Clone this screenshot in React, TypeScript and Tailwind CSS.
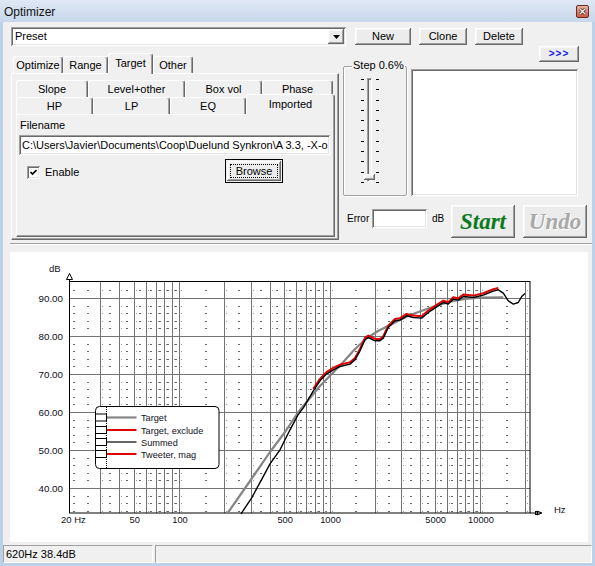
import React from "react";

const raised =
  "bg-[#ececec] shadow-[inset_-1px_-1px_#696969,inset_1px_1px_#ffffff,inset_-2px_-2px_#a0a0a0,inset_2px_2px_#f6f6f6]";
const sunken =
  "bg-white shadow-[inset_1px_1px_#a0a0a0,inset_-1px_-1px_#ffffff,inset_2px_2px_#696969,inset_-2px_-2px_#e3e3e3]";

const lx = (f: number) => 179 + 150.5 * (Math.log10(f) - 2);
const ly = (db: number) => 298 + (90 - db) * 3.8;

const majorF: number[] = [];
for (let d = 10; d <= 10000; d *= 10) {
  for (let k = 1; k <= 9; k++) {
    const f = d * k;
    if (f >= 30 && f <= 20000) majorF.push(f);
  }
}
majorF.push(20000);
const dotF: number[] = [20];
for (let d = 10; d <= 10000; d *= 10) {
  for (let k = 1; k <= 9; k++) {
    const f = d * (k + 0.5);
    if (f >= 25 && f <= 16000) dotF.push(f);
  }
}
const dotRows: number[] = [];
for (let db = 34; db <= 92; db += 2) dotRows.push(db);
const majorRows = [40, 50, 60, 70, 80, 90];

const black: [number, number][] = [
  [241, 513], [251.7, 497], [262, 478], [270, 463], [280, 449], [290, 429], [298, 414],
  [303.3, 407], [313.3, 390], [320, 380], [326.7, 373], [333.3, 369], [340, 365.7],
  [350, 363.3], [355, 359], [360, 350], [365, 339], [368.3, 336.7], [375, 340], [380, 340],
  [383.3, 337.3], [388.3, 326.7], [395, 320], [400, 319.3], [406.7, 315], [413.3, 316.7],
  [421.7, 317.3], [428.3, 311.7], [436.7, 306], [443.3, 301.7], [448.3, 303.3],
  [453.3, 298.3], [458.3, 299.3], [463.3, 295.7], [473.3, 296.7], [483.3, 294.3],
  [493.3, 290.3], [498.3, 289], [503.3, 292.3], [508.3, 300], [513.3, 303.3],
  [518.3, 301.7], [521.7, 295.7], [525, 292.7],
];
const gray: [number, number][] = [
  [227.7, 513], [250, 481], [270, 452], [285, 432], [297.7, 413], [303.3, 406],
  [320, 386], [343.3, 362], [355, 349], [366.7, 338.3], [378, 331], [390, 325],
  [410, 315], [433.3, 306.7], [450, 301.7], [465, 299], [480, 297.7], [503.3, 297.3],
];
const pts = (a: [number, number][], dy = 0) => a.map(([x, y]) => `${x},${y + dy}`).join(" ");
const red = black.filter(([x]) => x >= 312 && x <= 501);

function Chart() {
  return (
    <svg width={578} height={290} viewBox="10 252 578 290" fontFamily="'Liberation Sans', Arial, sans-serif">
      <rect x={10} y={252} width={578} height={290} fill="#ffffff" />
      {dotF.map((f) =>
        dotRows.map((db) => (
          <rect key={`d${f}-${db}`} x={Math.round(lx(f)) - 1} y={Math.round(ly(db))} width={2} height={1} fill="#666" />
        ))
      )}
      {majorF.map((f) =>
        dotRows.map((db) => (
          <rect key={`m${f}-${db}`} x={Math.round(lx(f)) + 2} y={Math.round(ly(db))} width={1} height={1} fill="#999" />
        ))
      )}
      {majorF.map((f) => (
        <line key={`v${f}`} x1={Math.round(lx(f)) + 0.5} x2={Math.round(lx(f)) + 0.5} y1={282} y2={513} stroke="#737373" strokeWidth={1} />
      ))}
      {majorRows.map((db) => (
        <line key={`h${db}`} x1={70} x2={530} y1={Math.round(ly(db)) + 0.5} y2={Math.round(ly(db)) + 0.5} stroke="#737373" strokeWidth={1} />
      ))}
      <rect x={69.5} y={281.5} width={460.5} height={231.5} fill="none" stroke="#000" strokeWidth={1} />
      <line x1={69.5} x2={69.5} y1={274} y2={282} stroke="#000" />
      <polygon points="66.5,279.5 69.5,273.5 72.5,279.5" fill="#fff" stroke="#000" />
      <line x1={530} x2={542} y1={513} y2={513} stroke="#000" />
      <polyline points="537.5,511 541.5,513 537.5,515" fill="none" stroke="#000" />
      <rect x={535.5} y={511.5} width={2} height={3} fill="none" stroke="#000" />

      <polyline points={pts(gray)} fill="none" stroke="#858585" strokeWidth={2.2} strokeLinejoin="round" />
      <polyline points={pts(red, -1.1)} fill="none" stroke="#e00000" strokeWidth={2} strokeLinejoin="round" />
      <polyline points={pts(black, 0.8)} fill="none" stroke="#000" strokeWidth={1.4} strokeLinejoin="round" />

      <text x={49} y={271.5} fontSize={9.5} fill="#101020">dB</text>
      {majorRows.map((db) => (
        <text key={`yl${db}`} x={63} y={Math.round(ly(db)) + 4} fontSize={9.8} textAnchor="end" fill="#101020">
          {db}.00
        </text>
      ))}
      <text x={61} y={523} fontSize={9.5} fill="#101020">20 Hz</text>
      {[
        [50, "50"], [100, "100"], [500, "500"], [1000, "1000"], [5000, "5000"], [10000, "10000"],
      ].map(([f, t]) => (
        <text key={`xl${t}`} x={lx(f as number) + 1} y={523} fontSize={9.3} textAnchor="middle" fill="#101020">
          {t}
        </text>
      ))}
      <text x={554} y={513} fontSize={9.5} fill="#101020">Hz</text>

      <rect x={95.5} y={406.5} width={123.5} height={62} rx={4} fill="#fff" stroke="#000" />
      <line x1={106.5} x2={106.5} y1={407} y2={468} stroke="#000" strokeDasharray="1 1" />
      {[
        { y: 417.5, c: "#858585", w: 2.2, t: "Target" },
        { y: 430, c: "#e00000", w: 2, t: "Target, exclude" },
        { y: 442, c: "#000", w: 1.2, t: "Summed" },
        { y: 454, c: "#e00000", w: 2, t: "Tweeter, mag" },
      ].map((r) => (
        <g key={r.t}>
          <rect x={95.5} y={r.y - 3.5} width={11} height={7} fill="#fff" stroke="#000" />
          <line x1={107} x2={136.5} y1={r.y} y2={r.y} stroke={r.c} strokeWidth={r.w} />
          <text x={141} y={r.y + 3.5} fontSize={9.2} fill="#101020">{r.t}</text>
        </g>
      ))}
    </svg>
  );
}

function OTab({ label, cls, selected }: { label: string; cls: string; selected?: boolean }) {
  if (selected)
    return (
      <div className={`relative z-10 -mb-px h-[21px] ${cls} flex justify-center pt-[2px] rounded-t-[3px] border-l border-t border-white border-r border-r-[#696969] bg-[#f0f0f0] shadow-[inset_-1px_0_#a0a0a0] leading-[14px]`}>
        {label}
      </div>
    );
  return (
    <div className={`h-[17px] ${cls} flex justify-center pt-[2px] rounded-t-[3px] border-l border-t border-white border-r border-r-[#696969] shadow-[inset_-1px_0_#a0a0a0] leading-[13px]`}>
      {label}
    </div>
  );
}

export default function App() {
  return (
    <div className="w-[595px] h-[566px] flex flex-col bg-[#bcd1ea] font-['Liberation_Sans',Arial,sans-serif] text-[11px] text-black overflow-hidden">
      <div className="h-[22px] flex items-center justify-between bg-[linear-gradient(to_bottom,#dfe8f4,#c8d7ec)] pl-[4px] pr-[6px]">
        <span className="text-[12px] text-[#111] pt-[2px]">Optimizer</span>
        <div className="w-[13px] h-[13px] rounded-[2px] border border-[#6e2a20] bg-[linear-gradient(to_bottom,#eab1a3,#c85a44)] flex items-center justify-center">
          <svg width="7" height="7" viewBox="0 0 7 7">
            <path d="M1 1L6 6M6 1L1 6" stroke="#3a1510" strokeWidth="2.6" />
            <path d="M1 1L6 6M6 1L1 6" stroke="#fff" strokeWidth="1.4" />
          </svg>
        </div>
      </div>

      <div className="mx-[3px] mb-[3px] flex-1 flex flex-col bg-[#f0f0f0] pt-[5px]">
        <div className="flex h-[19px] pl-[8px] items-start">
          <div className={`w-[335px] h-[19px] ${sunken} flex items-center justify-between pl-[4px] pr-[2px]`}>
            <span className="leading-[13px]">Preset</span>
            <div className={`w-[16px] h-[15px] ${raised} flex items-center justify-center`}>
              <svg width="7" height="4" viewBox="0 0 7 4"><path d="M0 0H7L3.5 4Z" fill="#000" /></svg>
            </div>
          </div>
          <button className={`ml-[9px] mt-[1px] w-[56px] h-[17px] ${raised} leading-[13px]`}>New</button>
          <button className={`ml-[8px] mt-[1px] w-[48px] h-[17px] ${raised} leading-[13px]`}>Clone</button>
          <button className={`ml-[8px] mt-[1px] w-[48px] h-[17px] ${raised} leading-[13px]`}>Delete</button>
        </div>

        <div className="flex h-[194px] items-start">
          <div className="ml-[8px] mt-[7px] w-[328px] flex flex-col">
            <div className="flex items-end h-[20px] pl-[2px]">
              <OTab label="Optimize" cls="w-[50px]" />
              <OTab label="Range" cls="w-[45px]" />
              <OTab label="Target" cls="w-[45px]" selected />
              <OTab label="Other" cls="w-[40px]" />
            </div>
            <div className="h-[167px] border border-t-white border-l-white border-r-[#696969] border-b-[#696969] shadow-[inset_-1px_-1px_#a0a0a0] pl-[4px] pt-[6px]">
              <div className="flex items-end h-[17px]">
                <OTab label="Slope" cls="w-[72px]" />
                <OTab label="Level+other" cls="w-[97px]" />
                <OTab label="Box vol" cls="w-[77px]" />
                <OTab label="Phase" cls="w-[71px]" />
              </div>
              <div className="flex items-end h-[17px]">
                <OTab label="HP" cls="w-[77px]" />
                <OTab label="LP" cls="w-[77px]" />
                <OTab label="EQ" cls="w-[76px]" />
                <OTab label="Imported" cls="w-[89px]" selected />
              </div>
              <div className="w-[319px] h-[123px] border border-t-white border-l-white border-r-[#696969] border-b-[#696969] shadow-[inset_-1px_-1px_#a0a0a0] pl-[3px] flex flex-col">
                <div className="mt-[4px] leading-[13px]">Filename</div>
                <div className={`-ml-px mt-[3px] w-[311px] h-[20px] ${sunken} flex items-center pl-[3px] overflow-hidden whitespace-nowrap leading-[13px]`}>
                  C:\Users\Javier\Documents\Coop\Duelund Synkron\A 3.3, -X-o
                </div>
                <div className="mt-[4px] flex items-start">
                  <div className="ml-[7px] mt-[7px] w-[198px] flex items-center gap-[5px]">
                    <div className="w-[13px] h-[13px] bg-white shadow-[inset_1px_1px_#a0a0a0,inset_-1px_-1px_#ffffff,inset_2px_2px_#696969,inset_-2px_-2px_#e3e3e3] flex items-center justify-center">
                      <svg width="7" height="7" viewBox="0 0 7 7"><path d="M0.5 3L2.5 5L6.5 1" stroke="#000" strokeWidth="1.6" fill="none" /></svg>
                    </div>
                    <span className="leading-[13px]">Enable</span>
                  </div>
                  <button className="w-[58px] h-[24px] border border-black p-px">
                    <div className={`w-full h-full ${raised} p-[3px]`}>
                      <div className="w-full h-full border border-dotted border-black flex items-center justify-center leading-[13px]">Browse</div>
                    </div>
                  </button>
                </div>
              </div>
            </div>
          </div>

          <div className="ml-[4px] flex-1 flex flex-col">
            <div className="flex justify-end pr-[13px]">
              <button className={`w-[40px] h-[16px] ${raised} text-[#1515e0] font-bold text-[10px] leading-[12px] tracking-[1px]`}>&gt;&gt;&gt;</button>
            </div>
            <div className="mt-[4px] flex h-[130px]">
              <div className="relative w-[64px] h-[130px] border border-[#a0a0a0] rounded-[2px] shadow-[inset_1px_1px_#ffffff,1px_1px_#ffffff] pt-[11px] pl-[17px]">
                <span className="absolute left-[8px] -top-[8px] bg-[#f0f0f0] px-px leading-[13px] text-[11px]">Step 0.6%</span>
                <div className="flex">
                  <div className="mt-[1px] h-[104px] w-[3px] flex flex-col justify-between">
                    {Array.from({ length: 11 }).map((_, i) => (
                      <div key={i} className="h-px w-[3px] bg-black" />
                    ))}
                  </div>
                  <div className="relative ml-[3px] w-[5px] h-[104px] border-l border-t border-[#a0a0a0] border-r border-r-white border-b border-b-white shadow-[inset_1px_1px_#696969]">
                    <div className={`absolute -left-[4px] top-[95px] w-[11px] h-[6px] ${raised}`} />
                  </div>
                  <div className="ml-[4px] mt-[1px] h-[104px] w-[3px] flex flex-col justify-between">
                    {Array.from({ length: 11 }).map((_, i) => (
                      <div key={i} className="h-px w-[3px] bg-black" />
                    ))}
                  </div>
                </div>
              </div>
              <div className={`ml-[4px] mt-[3px] w-[167px] h-[127px] ${sunken}`} />
            </div>
            <div className="mt-[8px] flex items-start h-[34px]">
              <span className="ml-[4px] mt-[8px] w-[25px] text-[10px] leading-[13px]">Error</span>
              <div className={`mt-[5px] w-[55px] h-[19px] ${sunken}`} />
              <span className="mt-[8px] w-[24px] pl-[5px] text-[10px] leading-[13px]">dB</span>
              <button className={`mt-[1px] w-[64px] h-[33px] ${raised} font-['Liberation_Serif','Times_New_Roman',serif] italic font-bold text-[23px] leading-[26px] text-[#0a7a1e]`}>Start</button>
              <button className={`ml-[8px] mt-[1px] w-[64px] h-[33px] ${raised} font-['Liberation_Serif','Times_New_Roman',serif] italic font-bold text-[23px] leading-[26px] text-[#a9a9a9] [text-shadow:1px_1px_#ffffff]`}>Undo</button>
            </div>
          </div>
        </div>

        <div className="mt-[3px] ml-[7px] h-[2px] border-t border-[#a0a0a0] border-b border-b-white" />

        <div className="mt-[7px] ml-[7px] w-[578px] h-[290px] bg-white border-b border-[#a0a0a0]">
          <Chart />
        </div>

        <div className="mt-[3px] h-[18px] flex gap-[2px]">
          <div className="w-[150px] h-full border-t border-l border-[#a0a0a0] border-r border-r-white border-b border-b-white flex items-center pl-[2px] text-[11px] leading-[13px]">
            620Hz 38.4dB
          </div>
          <div className="flex-1 h-full border-t border-l border-[#a0a0a0] border-r border-r-white border-b border-b-white" />
        </div>
      </div>
    </div>
  );
}
